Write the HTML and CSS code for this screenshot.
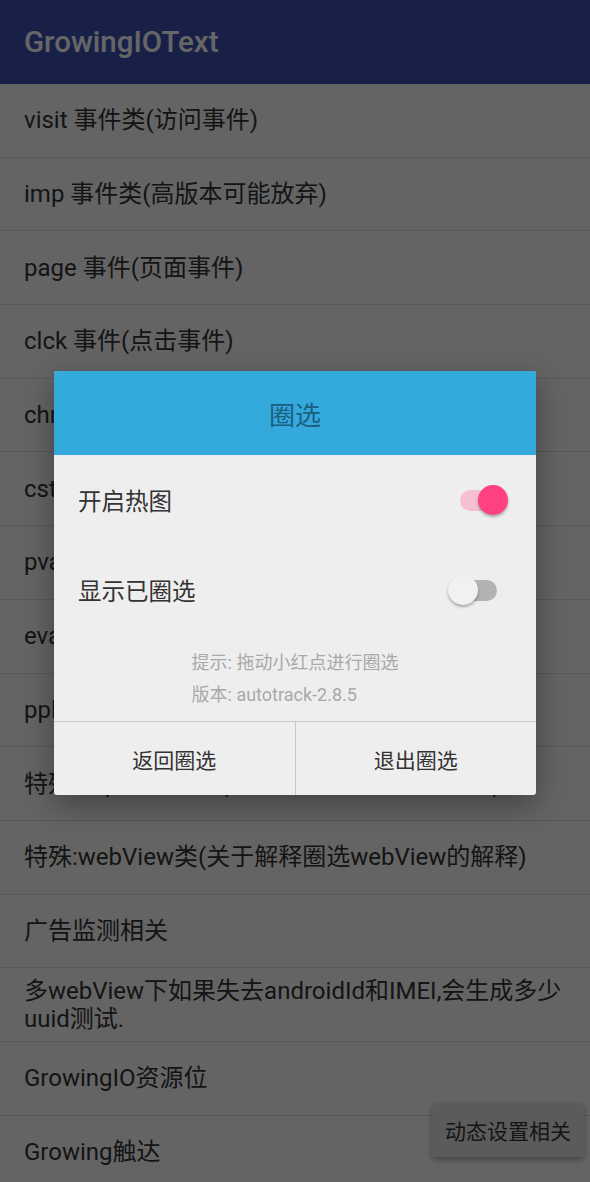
FILE: index.html
```html
<!DOCTYPE html>
<html lang="zh">
<head>
<meta charset="utf-8">
<link rel="stylesheet" href="styles.css">
</head>
<body>
<div class="screen">
  <header class="appbar"><span class="appbar-title">GrowingIOText</span></header>
  <ul class="list">
    <li class="row">visit 事件类(访问事件)</li>
    <li class="row">imp 事件类(高版本可能放弃)</li>
    <li class="row">page 事件(页面事件)</li>
    <li class="row">clck 事件(点击事件)</li>
    <li class="row">chng 事件(修改事件)</li>
    <li class="row">cstm 事件(自定义事件)</li>
    <li class="row">pvar 事件(页面变量)</li>
    <li class="row">evar 事件(转化变量)</li>
    <li class="row">ppl 事件(用户变量)</li>
    <li class="row">特殊:impression类(关于曝光事件的相关解释)</li>
    <li class="row">特殊:webView类(关于解释圈选webView的解释)</li>
    <li class="row">广告监测相关</li>
    <li class="row">多webView下如果失去androidId和IMEI,会生成多少uuid测试.</li>
    <li class="row">GrowingIO资源位</li>
    <li class="row">Growing触达</li>
  </ul>
  <button class="float-btn">动态设置相关</button>
  <div class="scrim"></div>
  <div class="dialog">
    <div class="dialog-head">圈选</div>
    <div class="dialog-body">
      <div class="opt">
        <span class="opt-label">开启热图</span>
        <span class="switch on"><span class="track"></span><span class="thumb"></span></span>
      </div>
      <div class="opt">
        <span class="opt-label">显示已圈选</span>
        <span class="switch"><span class="track"></span><span class="thumb"></span></span>
      </div>
      <div class="hints">
        <div class="hint-block">
          <div class="hint">提示: 拖动小红点进行圈选</div>
          <div class="hint">版本: autotrack-2.8.5</div>
        </div>
      </div>
    </div>
    <div class="dialog-actions">
      <button class="action">返回圈选</button>
      <button class="action">退出圈选</button>
    </div>
  </div>
</div>
</body>
</html>
```
FILE: styles.css
```css
* { box-sizing: border-box; }
html, body { margin: 0; padding: 0; }
body {
  width: 590px;
  height: 1182px;
  overflow: hidden;
  background: #fafafa;
  font-family: Roboto, "Noto Sans CJK SC", sans-serif;
}
.screen {
  position: relative;
  width: 590px;
  height: 1182px;
  overflow: hidden;
  background: #fafafa;
}
.appbar {
  height: 84px;
  background: #3f51b5;
  display: flex;
  align-items: center;
  padding-left: 24px;
}
.appbar-title {
  color: #ffffff;
  font-size: 29.5px;
  font-weight: 500;
}
.list {
  list-style: none;
  margin: 0;
  padding: 0;
}
.row {
  height: 73.7px;
  border-bottom: 1.6px solid #dcdcdc;
  display: flex;
  align-items: center;
  padding: 0 20px 0 24px;
  font-size: 24px;
  line-height: 28px;
  color: #343434;
}
.float-btn {
  position: absolute;
  left: 432px;
  top: 1103px;
  width: 152px;
  height: 54px;
  border: none;
  border-radius: 3px;
  background: #e4e4e4;
  color: #353535;
  font-family: Roboto, "Noto Sans CJK SC", sans-serif;
  font-size: 21px;
  padding: 0;
  box-shadow: 0 3px 6px rgba(0,0,0,0.3);
}
.scrim {
  position: absolute;
  inset: 0;
  background: rgba(0,0,0,0.6);
}
.dialog {
  position: absolute;
  left: 54px;
  top: 371px;
  width: 482px;
  height: 424px;
  background: #eeeeee;
  border-radius: 3px;
  overflow: hidden;
  box-shadow: 0 10px 30px rgba(0,0,0,0.35);
  display: flex;
  flex-direction: column;
}
.dialog-head {
  height: 84px;
  background: #34a9dc;
  color: #1c5e80;
  font-size: 26px;
  display: flex;
  align-items: center;
  justify-content: center;
  flex: none;
}
.dialog-body {
  flex: 1;
  display: flex;
  flex-direction: column;
}
.opt {
  height: 90px;
  display: flex;
  align-items: center;
  justify-content: space-between;
  padding: 0 28px 0 24px;
  flex: none;
}
.opt-label {
  font-size: 23.5px;
  color: #333333;
}
.switch {
  position: relative;
  width: 60px;
  height: 30px;
  flex: none;
}
.switch .track {
  position: absolute;
  left: 12px;
  top: 4.5px;
  width: 37px;
  height: 21px;
  border-radius: 11px;
  background: #b3b3b3;
}
.switch .thumb {
  position: absolute;
  left: 0;
  top: 0;
  width: 30px;
  height: 30px;
  border-radius: 50%;
  background: #f1f1f1;
  box-shadow: 0 2px 3px rgba(0,0,0,0.3);
}
.switch.on .track { background: #f5c0d3; }
.switch.on .thumb { left: 30px; background: #ff4081; }
.hints {
  flex: 1;
  display: flex;
  justify-content: center;
  padding-top: 12px;
}
.hint-block {
  display: flex;
  flex-direction: column;
}
.hint {
  font-size: 18px;
  line-height: 32px;
  color: #a9a9a9;
}
.dialog-actions {
  height: 74px;
  flex: none;
  display: flex;
  border-top: 1.5px solid #c9c9c9;
}
.action {
  flex: 1;
  border: none;
  background: transparent;
  font-family: Roboto, "Noto Sans CJK SC", sans-serif;
  font-size: 21px;
  color: #333333;
  padding: 0;
}
.action + .action { border-left: 1.5px solid #c9c9c9; }
```
